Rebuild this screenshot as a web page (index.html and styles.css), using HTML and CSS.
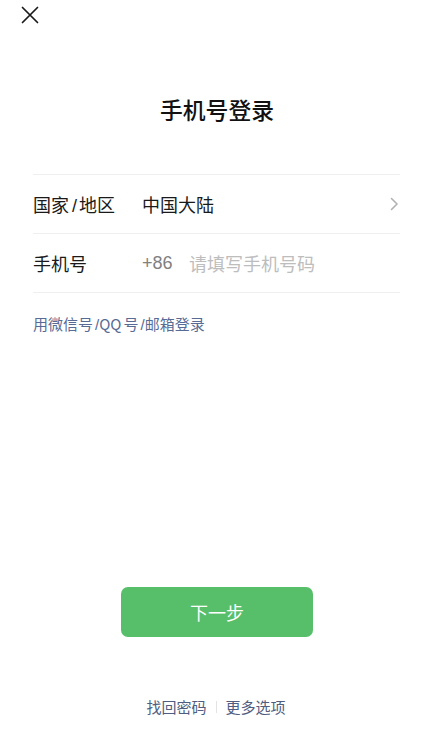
FILE: index.html
```html
<!DOCTYPE html>
<html lang="zh-CN">
<head>
<meta charset="utf-8">
<title>手机号登录</title>
<link rel="stylesheet" href="styles.css">
</head>
<body>
<div class="page">
  <header class="topbar">
    <button class="close" aria-label="关闭">
      <svg width="18" height="18" viewBox="0 0 18 18"><path d="M1.5 1.5 L16.5 16.5 M16.5 1.5 L1.5 16.5" stroke="#1a1a1a" stroke-width="1.7" fill="none" stroke-linecap="round"/></svg>
    </button>
  </header>

  <h1 class="title">手机号登录</h1>

  <div class="form">
    <div class="row">
      <span class="label">国家<span class="slash">/</span>地区</span>
      <span class="value">中国大陆</span>
      <svg class="chev" width="9" height="14" viewBox="0 0 9 14"><path d="M1.5 1.5 L7 7 L1.5 12.5" stroke="#b2b2b2" stroke-width="1.6" fill="none" stroke-linecap="round" stroke-linejoin="round"/></svg>
    </div>
    <div class="row">
      <span class="label">手机号</span>
      <span class="code">+86</span>
      <span class="placeholder">请填写手机号码</span>
    </div>
  </div>

  <a class="alt-link">用微信号<span class="lslash">/</span>QQ<span class="lgap">号</span><span class="lslash">/</span>邮箱登录</a>

  <div class="actions">
    <button class="next">下一步</button>
  </div>

  <nav class="bottom">
    <a class="blink">找回密码</a>
    <span class="sep"></span>
    <a class="blink">更多选项</a>
  </nav>
</div>
</body>
</html>
```

FILE: styles.css
```css
* { box-sizing: border-box; }
html, body {
  margin: 0;
  padding: 0;
  background: #ffffff;
}
body {
  font-family: "Liberation Sans", "Noto Sans CJK SC", sans-serif;
  color: #1a1a1a;
}
.page {
  width: 434px;
  height: 743px;
  display: flex;
  flex-direction: column;
}
.topbar {
  height: 30px;
  padding: 6px 0 0 21px;
}
.close {
  border: 0;
  background: none;
  padding: 0;
  width: 18px;
  height: 18px;
  display: block;
}
.close svg { display: block; }
.title {
  margin: 64px 0 0;
  text-align: center;
  font-family: "Noto Sans CJK SC", sans-serif;
  font-size: 22.8px;
  line-height: 32px;
  font-weight: 500;
  color: #111;
}
.form {
  margin: 48px 34px 0 33px;
  border-top: 1px solid #efefef;
}
.row {
  height: 59px;
  border-bottom: 1px solid #efefef;
  display: flex;
  align-items: center;
  font-size: 18px;
  font-family: "Noto Sans CJK SC", sans-serif;
}
.label {
  width: 109px;
  color: #1a1a1a;
}
.slash {
  font-family: "Liberation Sans", sans-serif;
  margin: 0 2px 0 3px;
}
.value {
  flex: 1;
  color: #1a1a1a;
}
.chev { margin-right: 1px; }
.code {
  font-family: "Liberation Sans", sans-serif;
  color: #808080;
  width: 47px;
}
.placeholder {
  color: #bdbdbd;
}
.alt-link {
  display: block;
  margin: 21px 0 0 33px;
  font-family: "Noto Sans CJK SC", sans-serif;
  font-size: 15px;
  line-height: 20px;
  color: #576b95;
}
.lslash {
  font-family: "Liberation Sans", sans-serif;
  margin-left: 2px;
}
.lgap { margin-left: 2px; }
.actions {
  display: flex;
  justify-content: center;
  margin-top: 252px;
}
.next {
  width: 192px;
  height: 50px;
  border: 0;
  border-radius: 7px;
  background: #57be6a;
  color: #ffffff;
  font-family: "Noto Sans CJK SC", sans-serif;
  font-size: 18px;
}
.bottom {
  margin-top: 60px;
  display: flex;
  justify-content: center;
  align-items: center;
  gap: 9px;
  font-family: "Noto Sans CJK SC", sans-serif;
  font-size: 15px;
  line-height: 20px;
  padding-right: 2px;
}
.blink { color: #4f5d80; }
.sep {
  width: 1px;
  height: 12px;
  background: #e3e3e3;
}
```
